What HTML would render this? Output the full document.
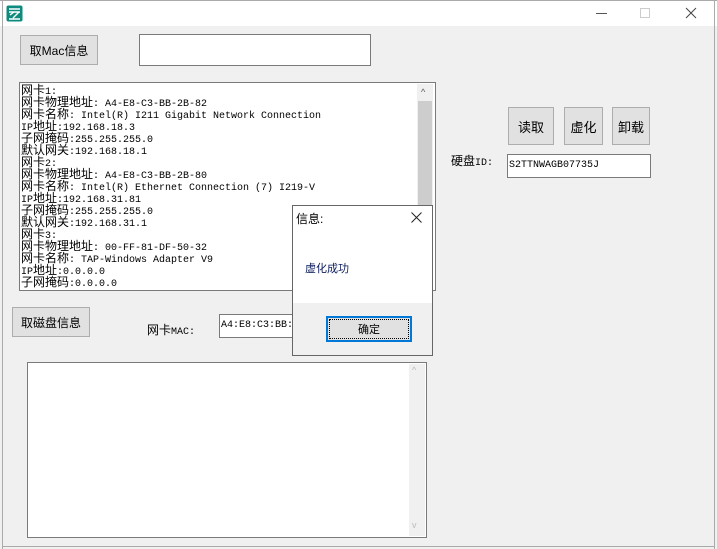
<!DOCTYPE html>
<html><head><meta charset="utf-8"><style>
*{box-sizing:border-box;margin:0;padding:0}
body{width:717px;height:549px;background:#f0f0f0;position:relative;overflow:hidden;font-family:"Liberation Sans","Noto Sans CJK SC",sans-serif;font-size:12px;color:#000}
.abs{position:absolute}
.btn{position:absolute;background:#e1e1e1;border:1px solid #adadad;display:flex;align-items:center;justify-content:center;font-size:12px}
.inp{position:absolute;background:#fff;border:1px solid #7a7a7a}
.mono{font-family:"Liberation Mono","Noto Sans CJK SC",monospace;font-size:10px;line-height:12px;white-space:nowrap}
.mono div{height:12px;line-height:12px;overflow:visible}
.c{font-family:"Noto Sans CJK SC",sans-serif;font-size:12px;line-height:12px}
</style></head><body>
<div class="abs" style="left:0;top:0;width:717px;height:26px;background:#fff"></div>
<div class="abs" style="left:2px;top:0;width:1px;height:549px;background:#aaa"></div>
<div class="abs" style="left:714px;top:0;width:1px;height:549px;background:#aaa"></div>
<div class="abs" style="left:2px;top:546px;width:713px;height:1px;background:#aaa"></div>
<div class="abs" style="left:0;top:0;width:717px;height:1px;background:#aaa"></div>
<svg class="abs" style="left:6px;top:5px" width="17" height="17"><rect x="0.5" y="0.5" width="16" height="16" rx="2" fill="#0e8a7e"/><path d="M3 4h11M3 7h11M4 10l4-3M7 13l6-6M3 14h11" stroke="#fff" stroke-width="1.4" fill="none"/></svg>
<div class="abs" style="left:596px;top:13px;width:11px;height:1px;background:#555"></div>
<div class="abs" style="left:640px;top:8px;width:10px;height:10px;border:1px solid #ccc"></div>
<svg class="abs" style="left:685px;top:7px" width="12" height="12"><path d="M1 1L11 11M11 1L1 11" stroke="#444" stroke-width="1"/></svg>

<div class="btn" style="left:20px;top:35px;width:78px;height:30px">取Mac信息</div>
<div class="inp" style="left:139px;top:34px;width:232px;height:32px"></div>

<div class="inp" style="left:19px;top:82px;width:417px;height:209px;overflow:hidden">
<div class="mono" style="position:absolute;left:1px;top:1px">
<div><span class="c">网卡</span>1:</div>
<div><span class="c">网卡物理地址</span>: A4-E8-C3-BB-2B-82</div>
<div><span class="c">网卡名称</span>: Intel(R) I211 Gigabit Network Connection</div>
<div>IP<span class="c">地址</span>:192.168.18.3</div>
<div><span class="c">子网掩码</span>:255.255.255.0</div>
<div><span class="c">默认网关</span>:192.168.18.1</div>
<div><span class="c">网卡</span>2:</div>
<div><span class="c">网卡物理地址</span>: A4-E8-C3-BB-2B-80</div>
<div><span class="c">网卡名称</span>: Intel(R) Ethernet Connection (7) I219-V</div>
<div>IP<span class="c">地址</span>:192.168.31.81</div>
<div><span class="c">子网掩码</span>:255.255.255.0</div>
<div><span class="c">默认网关</span>:192.168.31.1</div>
<div><span class="c">网卡</span>3:</div>
<div><span class="c">网卡物理地址</span>: 00-FF-81-DF-50-32</div>
<div><span class="c">网卡名称</span>: TAP-Windows Adapter V9</div>
<div>IP<span class="c">地址</span>:0.0.0.0</div>
<div><span class="c">子网掩码</span>:0.0.0.0</div>
</div>
<div class="abs" style="left:397px;top:1px;width:16px;height:206px;background:#f0f0f0"></div>
<div class="abs" style="left:398px;top:18px;width:14px;height:130px;background:#cdcdcd"></div>
<div class="abs" style="left:401px;top:4px;font-size:9px;color:#555">^</div>
</div>

<div class="btn" style="left:508px;top:107px;width:46px;height:38px;font-size:13px">读取</div>
<div class="btn" style="left:564px;top:107px;width:39px;height:38px;font-size:13px">虚化</div>
<div class="btn" style="left:612px;top:107px;width:38px;height:38px;font-size:13px">卸载</div>
<div class="abs mono" style="left:451px;top:155px"><span class="c">硬盘</span>ID:</div>
<div class="inp mono" style="left:507px;top:154px;width:144px;height:24px;padding:5px 0 0 1px">S2TTNWAGB07735J</div>

<div class="btn" style="left:12px;top:307px;width:78px;height:30px">取磁盘信息</div>
<div class="abs mono" style="left:147px;top:324px"><span class="c">网卡</span>MAC:</div>
<div class="inp mono" style="left:219px;top:314px;width:80px;height:24px;padding:5px 0 0 1px;overflow:hidden">A4:E8:C3:BB:</div>

<div class="inp" style="left:27px;top:362px;width:400px;height:176px">
<div class="abs" style="left:381px;top:1px;width:16px;height:172px;background:#f0f0f0"></div>
<div class="abs" style="left:384px;top:2px;font-size:9px;color:#bbb">^</div>
<div class="abs" style="left:384px;top:157px;font-size:9px;color:#bbb">v</div>
</div>

<div class="abs" style="left:292px;top:205px;width:141px;height:151px;background:#f0f0f0;border:1px solid #666">
<div class="abs" style="left:0;top:0;width:139px;height:97px;background:#fff"></div>
<div class="abs" style="left:3px;top:4px;font-size:12px">信息:</div>
<svg class="abs" style="left:118px;top:6px" width="11" height="11"><path d="M0.5 0.5L10.5 10.5M10.5 0.5L0.5 10.5" stroke="#222" stroke-width="1"/></svg>
<div class="abs" style="left:12px;top:54px;font-size:11px;color:#102060">虚化成功</div>
<div class="abs" style="left:33px;top:110px;width:86px;height:26px;border:2px solid #0078d7;background:#e1e1e1;display:flex;align-items:center;justify-content:center;font-size:11px"><div style="position:absolute;inset:1px;border:1px dotted #000"></div>确定</div>
</div>
</body></html>
